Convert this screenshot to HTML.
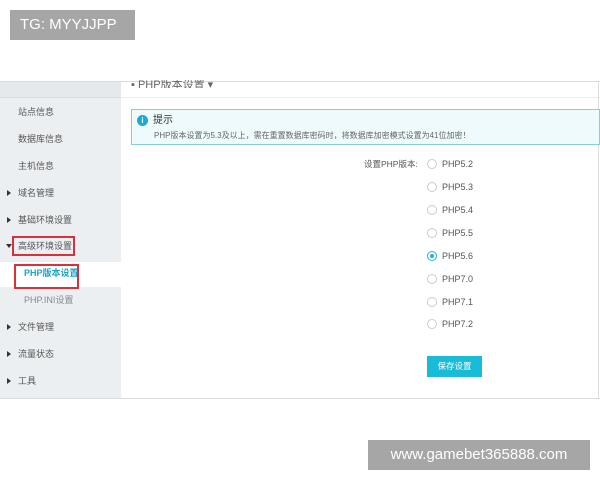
<!DOCTYPE html>
<html><head><meta charset="utf-8"><style>
*{margin:0;padding:0;box-sizing:border-box}
body{width:600px;height:480px;background:#fff;position:relative;overflow:hidden;font-family:"Liberation Sans","Noto Sans CJK SC",sans-serif;font-size:9px;color:#555}
.a{position:absolute}
.side{left:0;top:81px;width:121px;height:317px;background:#eceff1;border-top:1px solid #d8dcdf}
.it{position:absolute;left:18px;font-size:9px;color:#555;line-height:12px}
.tri{position:absolute;left:7px;width:0;height:0;border-top:3px solid transparent;border-bottom:3px solid transparent;border-left:4px solid #333}
.r{position:absolute;left:427px;width:10px;height:10px;border:1px solid #ccc;border-radius:50%;background:#fff}
.l{position:absolute;left:442px;font-size:9px;color:#555;line-height:12px}
</style></head><body>
<div class="a" style="left:10px;top:10px;width:125px;height:30px;background:#a6a6a6;color:#fff;font-size:15px;line-height:30px;padding-left:10px">TG: MYYJJPP</div>
<div class="a side"></div>
<div class="a" style="left:0;top:82px;width:121px;height:16px;background:#e6e9eb;border-bottom:1px solid #d8dcdf"></div>
<div class="a" style="left:121px;top:81px;width:479px;height:1px;background:#d8dcdf"></div>
<div class="a" style="left:121px;top:97px;width:479px;height:1px;background:#eee"></div>
<div class="a" style="left:131px;top:80px;font-size:11px;color:#666;line-height:10px;height:8px;overflow:hidden">▪ PHP版本设置 ▾</div>
<div class="a" style="left:0;top:398px;width:600px;height:1px;background:#d8dcdf"></div>
<div class="a" style="left:598px;top:81px;width:1px;height:317px;background:#ddd"></div>
<div class="it" style="top:106px">站点信息</div>
<div class="it" style="top:133px">数据库信息</div>
<div class="it" style="top:160px">主机信息</div>
<div class="tri" style="top:190px"></div><div class="it" style="top:187px">域名管理</div>
<div class="tri" style="top:217px"></div><div class="it" style="top:214px">基础环境设置</div>
<div class="a" style="left:6px;top:244px;width:0;height:0;border-left:3px solid transparent;border-right:3px solid transparent;border-top:4px solid #333"></div>
<div class="it" style="top:240px">高级环境设置</div>
<div class="a" style="left:12px;top:236px;width:63px;height:20px;border:2px solid #d9303c"></div>
<div class="a" style="left:0;top:262px;width:121px;height:25px;background:#fff"></div>
<div class="it" style="top:267px;left:24px;color:#1aa6c9;font-weight:bold">PHP版本设置</div>
<div class="a" style="left:14px;top:264px;width:65px;height:25px;border:2px solid #d9303c"></div>
<div class="it" style="top:294px;left:24px;color:#888">PHP.INI设置</div>
<div class="tri" style="top:324px"></div><div class="it" style="top:321px">文件管理</div>
<div class="tri" style="top:351px"></div><div class="it" style="top:348px">流量状态</div>
<div class="tri" style="top:378px"></div><div class="it" style="top:375px">工具</div>
<div class="a" style="left:131px;top:109px;width:469px;height:36px;background:#eefafb;border:1px solid #83d0d9"></div>
<div class="a" style="left:137px;top:115px;width:11px;height:11px;border-radius:50%;background:#1fa8d4;color:#fff;font-size:8px;font-weight:bold;text-align:center;line-height:11px">i</div>
<div class="a" style="left:153px;top:114px;font-size:10px;color:#333;line-height:13px">提示</div>
<div class="a" style="left:154px;top:130px;font-size:8px;color:#666;line-height:11px;white-space:nowrap">PHP版本设置为5.3及以上，需在重置数据库密码时，将数据库加密模式设置为41位加密！</div>
<div class="a" style="left:364px;top:158px;font-size:8.5px;color:#555;line-height:12px">设置PHP版本:</div>
<div class="r" style="top:159px"></div><div class="l" style="top:158px">PHP5.2</div>
<div class="r" style="top:182px"></div><div class="l" style="top:181px">PHP5.3</div>
<div class="r" style="top:205px"></div><div class="l" style="top:204px">PHP5.4</div>
<div class="r" style="top:228px"></div><div class="l" style="top:227px">PHP5.5</div>
<div class="r" style="top:251px;border-color:#1fb5d0"><div style="position:absolute;left:2px;top:2px;width:4px;height:4px;border-radius:50%;background:#1fb5d0"></div></div><div class="l" style="top:250px">PHP5.6</div>
<div class="r" style="top:274px"></div><div class="l" style="top:273px">PHP7.0</div>
<div class="r" style="top:297px"></div><div class="l" style="top:296px">PHP7.1</div>
<div class="r" style="top:319px"></div><div class="l" style="top:318px">PHP7.2</div>
<div class="a" style="left:427px;top:356px;width:55px;height:21px;background:#19bcd6;color:#fff;font-size:8.5px;text-align:center;line-height:21px">保存设置</div>
<div class="a" style="left:368px;top:440px;width:222px;height:30px;background:#a6a6a6;color:#fff;font-size:15px;line-height:30px;text-align:center">www.gamebet365888.com</div>
</body></html>
